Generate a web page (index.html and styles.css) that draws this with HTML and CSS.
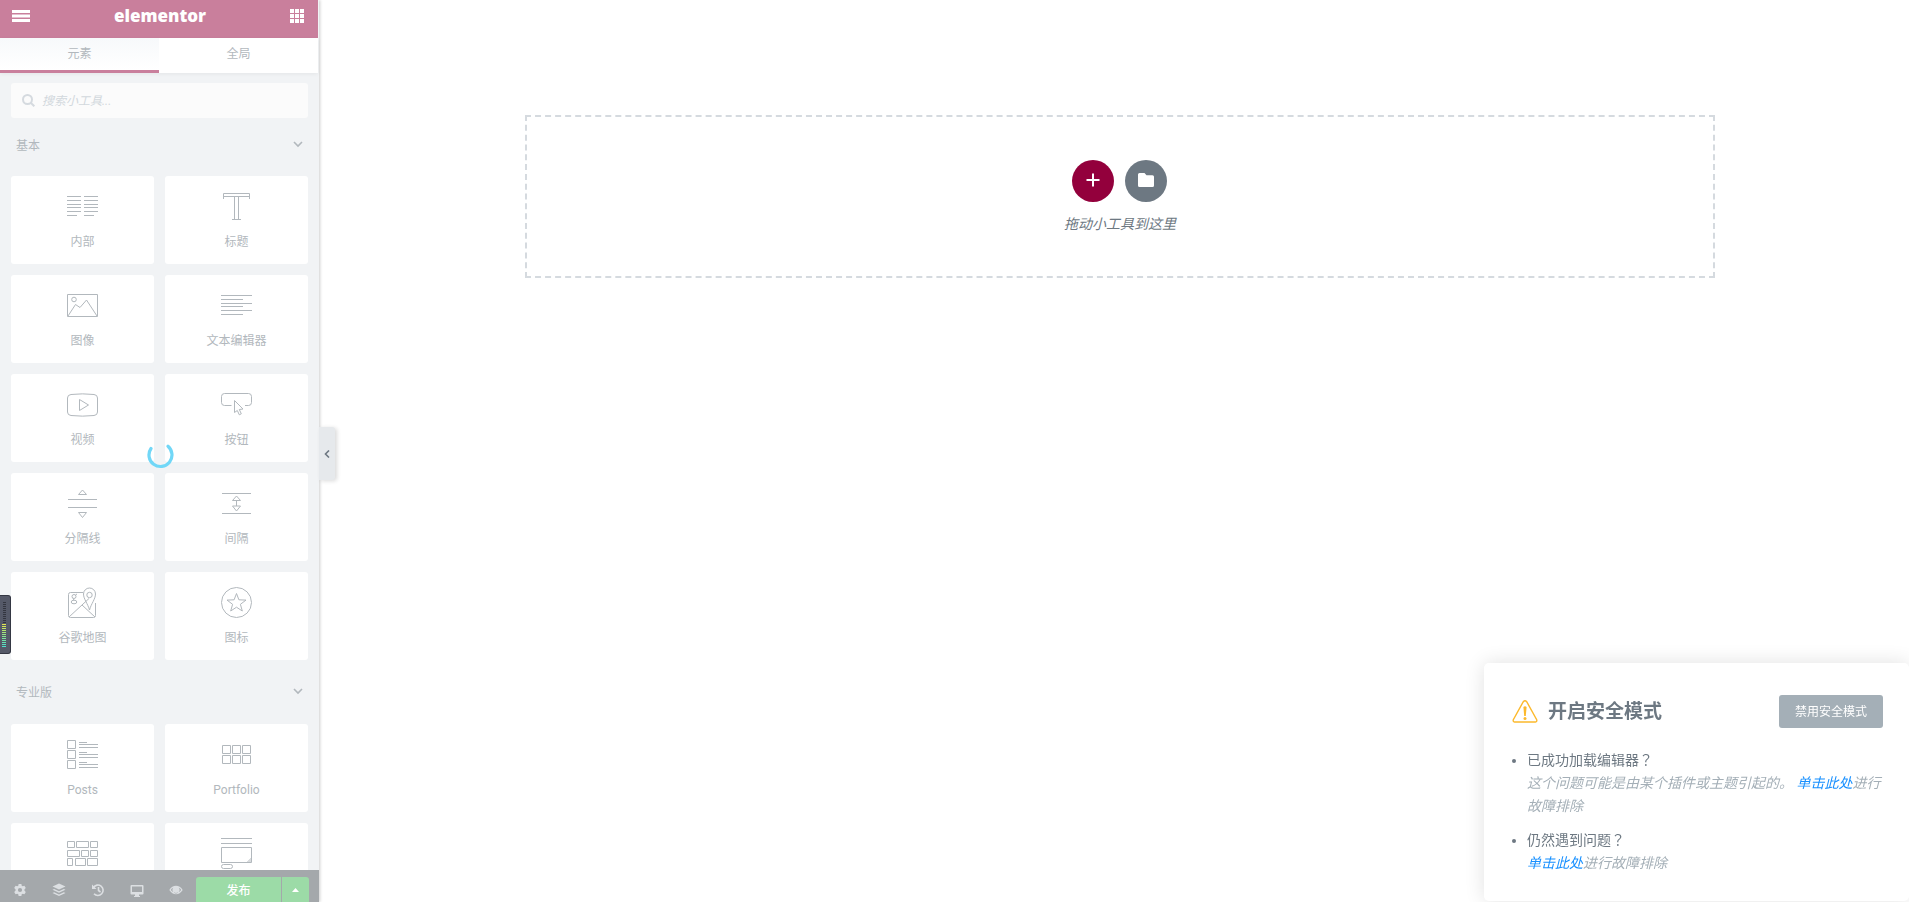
FILE: index.html
```html
<!DOCTYPE html>
<html lang="zh-CN">
<head>
<meta charset="utf-8">
<title>Elementor</title>
<link rel="stylesheet" href="styles.css">
</head>
<body>
<div class="editor">
  <aside class="panel">
    <header class="panel-header">
      <button class="icon-button" aria-label="菜单"><svg width="18" height="12" viewBox="0 0 18 12"><path d="M0 1.5h18M0 6h18M0 10.5h18" stroke="#fff" stroke-width="3"/></svg></button>
      <span class="logo">elementor</span>
      <button class="icon-button" aria-label="小工具"><svg width="14" height="14" viewBox="0 0 14 14" fill="#fff"><path d="M0 0h4v4H0zM5 0h4v4H5zM10 0h4v4h-4zM0 5h4v4H0zM5 5h4v4H5zM10 5h4v4h-4zM0 10h4v4H0zM5 10h4v4H5zM10 10h4v4h-4z"/></svg></button>
    </header>
    <nav class="tabs">
      <button class="tab tab-active">元素</button>
      <button class="tab">全局</button>
    </nav>
    <main class="panel-body">
      <label class="search">
        <svg width="13" height="13" viewBox="0 0 13 13" fill="none" stroke="#d5dadf" stroke-width="2"><circle cx="5.5" cy="5.5" r="4.5"/><path d="M9 9l3.3 3.3"/></svg>
        <input class="search-input" type="search" placeholder="搜索小工具..." aria-label="搜索小工具">
      </label>

      <button class="category">基本<svg width="10" height="7" viewBox="0 0 10 7"><path d="M1 1l4 4 4-4"/></svg></button>
      <div class="widgets">
        <button class="widget"><svg viewBox="0 0 31 31"><path d="M0 5.5h14M0 9.5h14M0 13.5h14M0 16.5h14M0 20.5h14M0 24.5h10M17 5.5h14M17 9.5h14M17 13.5h14M17 16.5h14M17 20.5h14M17 24.5h10"/></svg>内部</button>
        <button class="widget"><svg viewBox="0 0 31 31"><path d="M2.5 8V2.500h26V8M2.500 5.500h26M13.500 5.500v23M17.500 5.500v23M11 28.500h9"/></svg>标题</button>
        <button class="widget"><svg viewBox="0 0 31 31"><path d="M.5 4.5h30v22H.5zM1 26l7.500-11.500 4.500 3 6.500-7.500L30 26"/><circle cx="7" cy="9.500" r="2.300"/></svg>图像</button>
        <button class="widget"><svg viewBox="0 0 31 31"><path d="M0 5.500h31M0 9.500h22M0 13.500h31M0 16.500h22M0 20.500h31M0 24.500h22"/></svg>文本编辑器</button>
        <button class="widget"><svg viewBox="0 0 31 31"><path d="M4 5.500q11.500-1.300 23 0 3.500.3 3.500 3.500v14q0 3.200-3.500 3.500-11.500 1.300-23 0Q.5 26.200.5 23V9Q.5 5.800 4 5.500zM12.500 10.500v11l9-5.500z"/></svg>视频</button>
        <button class="widget"><svg viewBox="0 0 31 31"><path d="M10.500 16.500h-7q-3 0-3-3v-6q0-3 3-3h24q3 0 3 3v6q0 3-3 3H24M13.500 11.500v12l2.800-2 2 4.300 2-1-2-4.300 3.700-.5z"/></svg>按钮</button>
        <button class="widget"><svg viewBox="0 0 31 31"><path d="M1 11.500h29M1 19.500h29M15.500 2l4 4.500h-8zM15.500 29.500l4-5h-8z"/></svg>分隔线</button>
        <button class="widget"><svg viewBox="0 0 31 31"><path d="M1 5.500h29M1 25.500h29M15.500 8l4 4.500h-8zM15.500 23l4-5h-8zM15.500 12.500V18"/></svg>间隔</button>
        <button class="widget"><svg viewBox="0 0 31 31"><path d="M16 5.500H3.500q-2 0-2 2v21q0 2 2 2h23q2 0 2-2V16M2 30l20-18.500M15 18l13 12M22.500 23C21 17 16.500 12 16.500 7a6 6 0 0 1 12 0c0 5-4.500 10-6 16z"/><circle cx="22.500" cy="8" r="2.700"/><circle cx="7" cy="9.500" r="2"/><ellipse cx="7" cy="15" rx="2.800" ry="1.800"/><path d="M8.500 8L10 7M6 11.500l1 1.700"/></svg>谷歌地图</button>
        <button class="widget"><svg viewBox="0 0 31 31"><circle cx="15.500" cy="15.500" r="15"/><path d="M15.500 6.500l2.400 6.300 7.100.3-5.600 4.200 1.900 6.700-5.800-3.800L9.700 24l1.900-6.700L6 13.100l7.100-.3z"/></svg>图标</button>
      </div>

      <button class="category">专业版<svg width="10" height="7" viewBox="0 0 10 7"><path d="M1 1l4 4 4-4"/></svg></button>
      <div class="widgets">
        <button class="widget"><svg viewBox="0 0 31 31"><path d="M.5 1.500h8v8h-8zM.5 11.500h8v8h-8zM.5 21.500h8v8h-8zM12 3.500h8M12 5.500h19M12 8.500h19M12 13.500h8M12 15.500h19M12 18.500h19M12 23.500h8M12 25.500h19M12 28.500h19"/></svg>Posts</button>
        <button class="widget"><svg viewBox="0 0 31 31"><path d="M1.500 6.500h8v8h-8zM11.500 6.500h8v8h-8zM21.500 6.500h8v8h-8zM1.500 16.500h8v8h-8zM11.500 16.500h8v8h-8zM21.500 16.500h8v8h-8z"/></svg>Portfolio</button>
        <button class="widget" aria-label="Gallery"><svg viewBox="0 0 31 31"><path d="M.5 3.500h7v6h-7zM9.500 3.500h12v6h-12zM23.500 3.500h7v6h-7zM.5 12.500h12v6H.5zM14.500 12.500h7v6h-7zM23.500 12.500h7v6h-7zM.5 20.500h5v7h-5zM8.500 20.500h10v7h-10zM20.500 20.500h10v7h-10z"/></svg></button>
        <button class="widget" aria-label="Form"><svg viewBox="0 0 31 31"><path d="M0 .5h31M0 5.500h31M.5 9.500h30v15H.5zM26.500 24l4-4M28.500 24l2-2"/><rect x=".5" y="26.500" width="11" height="4" rx="2"/></svg></button>
      </div>
    </main>
    <footer class="panel-footer">
      <button class="tool" aria-label="设置"><svg viewBox="0 0 14 14"><path fill-rule="evenodd" d="M5.600 1h2.800l.3 1.700 1.100.6 1.600-.6 1.400 2.400-1.300 1.200v1.400l1.300 1.200-1.400 2.400-1.600-.6-1.100.6-.3 1.700H5.600l-.3-1.700-1.100-.6-1.600.6L1.200 8.900l1.300-1.200V6.300L1.200 5.100l1.400-2.400 1.600.6 1.100-.6zM7 4.900a2.100 2.100 0 1 0 0 4.200 2.100 2.100 0 0 0 0-4.200z"/></svg></button>
      <button class="tool" aria-label="导航器"><svg viewBox="0 0 14 14"><path d="M7 .5l6.500 3L7 6.500.5 3.500zM2.200 6L7 8.200 11.800 6l1.700.8L7 9.800.5 6.800zM2.200 9.300L7 11.500l4.800-2.200 1.700.8L7 13.100.5 10.100z"/></svg></button>
      <button class="tool" aria-label="历史"><svg viewBox="0 0 14 14"><path d="M2.500 4.500A5.200 5.200 0 1 1 3 10.700M7.500 4v3.500l2 1.500" fill="none" stroke="#dcdfe2" stroke-width="1.600"/><path d="M1 1.500V6h4.500z"/></svg></button>
      <button class="tool" aria-label="响应式模式"><svg viewBox="0 0 14 14"><path fill-rule="evenodd" d="M1.500 2h11q1 0 1 1v7.500q0 1-1 1H9V13h1v1H4v-1h1v-1.500H1.500q-1 0-1-1V3q0-1 1-1zM2 3.500V9h10V3.500z"/></svg></button>
      <button class="tool" aria-label="预览更改"><svg viewBox="0 0 14 14"><path fill-rule="evenodd" d="M.3 7Q3 2.800 7 2.800T13.700 7Q11 11.200 7 11.200T.3 7zM1.800 7Q4 10 7 10t5.200-3Q11.200 5.300 9.800 4.700a3.500 3.500 0 1 1-5.600 0Q2.800 5.300 1.800 7z"/></svg></button>
      <div class="publish-group">
        <button class="publish">发布</button>
        <button class="publish-more" aria-label="保存选项"><svg width="7" height="4" viewBox="0 0 7 4"><path d="M0 4L3.500 0 7 4z" fill="#fff"/></svg></button>
      </div>
    </footer>
    <svg class="spinner" viewBox="0 0 28 28"><path d="M5 7.500a11.500 11.500 0 1 0 17-2.200" fill="none" stroke="#71d7f7" stroke-width="3.200" stroke-linecap="round"/></svg>
    <button class="collapse" aria-label="隐藏面板"><svg width="6" height="8" viewBox="0 0 6 8"><path d="M5 .5L1.500 4 5 7.500" fill="none" stroke="#6d7882" stroke-width="1.600"/></svg></button>
  </aside>

  <section class="canvas">
    <div class="drop-zone">
      <div class="drop-actions">
        <button class="round round-add" aria-label="添加新版块"><svg width="14" height="14" viewBox="0 0 14 14"><path d="M7 .5v13M.5 7h13" stroke="#fff" stroke-width="2"/></svg></button>
        <button class="round round-folder" aria-label="添加模板"><svg width="16" height="14" viewBox="0 0 16 14"><path d="M1.500 0h5l2 2.300h6q1.500 0 1.500 1.500v8.700q0 1.500-1.500 1.500h-13Q0 14 0 12.500v-11Q0 0 1.500 0z" fill="#fff"/></svg></button>
      </div>
      <p class="drop-text">拖动小工具到这里</p>
    </div>
  </section>
</div>

<div class="meter" aria-hidden="true"><div class="meter-track"></div><div class="meter-level"></div></div>

<section class="safe-mode">
  <header class="safe-header">
    <svg width="26" height="23" viewBox="0 0 26 23"><path d="M11.300 1.700q1.700-2 3.400 0l10 18q.6 2-1.200 2.300h-21Q.7 21.700 1.300 19.700z" fill="none" stroke="#fcb92c" stroke-width="1.400"/><path d="M11.400 7q1.600-1.400 3.200 0L13.800 16h-1.600z" fill="#fcb92c"/><circle cx="13" cy="18.500" r="1.500" fill="#fcb92c"/></svg>
    <h2 class="safe-title">开启安全模式</h2>
    <button class="safe-button">禁用安全模式</button>
  </header>
  <ul class="safe-list">
    <li>已成功加载编辑器<span class="mark" lang="zh-TW">？</span><div class="safe-note">这个问题可能是由某个插件或主题引起的。 <a href="#">单击此处</a>进行故障排除</div></li>
    <li>仍然遇到问题<span class="mark" lang="zh-TW">？</span><div class="safe-note"><a href="#">单击此处</a>进行故障排除</div></li>
  </ul>
</section>
</body>
</html>
```
FILE: styles.css
```css
* { box-sizing: border-box; }

body {
  margin: 0;
  background: #fff;
  font-family: Roboto, "Noto Sans CJK SC", sans-serif;
  font-size: 12px;
}

button {
  margin: 0;
  padding: 0;
  border: 0;
  background: none;
  font: inherit;
  color: inherit;
}

.editor {
  display: flex;
  height: 100vh;
  overflow: hidden;
}

/* Side panel */
.panel {
  position: relative;
  display: flex;
  flex-direction: column;
  flex: 0 0 319px;
  background: #f1f3f5;
  color: #b2b8bd;
  box-shadow: 1px 0 3px rgba(0, 0, 0, 0.2);
}

.panel-header {
  display: flex;
  align-items: center;
  justify-content: space-between;
  flex: 0 0 38px;
  margin-right: 1px;
  padding: 0 14px 6px 12px;
  background: #c97f9c;
}

.icon-button { display: flex; }

.logo {
  color: #fff;
  font-family: "Open Sans", sans-serif;
  font-size: 17px;
  font-weight: 800;
  line-height: 24px;
}

.tabs {
  display: flex;
  flex: 0 0 35px;
  margin-right: 1px;
  box-shadow: 0 1px 4px rgba(0, 0, 0, 0.06);
}

.tab {
  flex: 1;
  padding-bottom: 3px;
  border-bottom: 3px solid #fff;
  background: #fff;
}

.tab-active {
  border-bottom-color: #c97f9c;
  background: linear-gradient(#f7f9fb, #fff);
}

.panel-body {
  flex: 1;
  min-height: 0;
  overflow: hidden;
  padding: 10px 11px 0;
}

.search {
  display: flex;
  align-items: center;
  gap: 7px;
  height: 35px;
  padding: 0 11px;
  border-radius: 3px;
  background: #fbfbfb;
}

.search-input {
  flex: 1;
  min-width: 0;
  padding: 0;
  border: 0;
  outline: 0;
  background: none;
  font: italic 12px Roboto, "Noto Sans CJK SC", sans-serif;
}

.search-input::placeholder { color: #d2d8dd; }

.category {
  display: flex;
  align-items: center;
  justify-content: space-between;
  width: 100%;
  height: 64px;
  padding: 0 5px 2px;
}

.search + .category {
  height: 58px;
  padding-bottom: 5px;
}

.category path {
  fill: none;
  stroke: #b2b8bd;
  stroke-width: 1.6;
}

.widgets {
  display: grid;
  grid-template-columns: 1fr 1fr;
  gap: 11px;
}

.widget {
  display: flex;
  flex-direction: column;
  align-items: center;
  gap: 11px;
  height: 88px;
  padding-top: 15px;
  border-radius: 3px;
  background: #fff;
  line-height: 18px;
}

.widget svg {
  flex: none;
  width: 31px;
  height: 31px;
  fill: none;
  stroke: #b2b8bd;
}

.panel-footer {
  display: flex;
  align-items: stretch;
  flex: 0 0 32px;
  background: #a4a8ab;
}

.tool {
  display: flex;
  align-items: center;
  justify-content: center;
  width: 39px;
  padding-top: 8px;
}

.tool svg {
  width: 14px;
  height: 14px;
  fill: #dcdfe2;
}

.publish-group {
  display: flex;
  flex: 1;
  gap: 1px;
  padding: 7px 10px 0 1px;
}

.publish {
  flex: 1;
  border-radius: 3px 0 0 0;
  background: #9cdba7;
  color: #fff;
  font-weight: 500;
}

.publish-more {
  display: flex;
  align-items: center;
  justify-content: center;
  width: 27px;
  border-radius: 0 3px 0 0;
  background: #9cdba7;
}

.spinner {
  position: absolute;
  top: 441px;
  left: 146px;
  width: 28px;
  height: 28px;
}

.collapse {
  position: absolute;
  top: 427px;
  left: 100%;
  display: flex;
  align-items: center;
  justify-content: center;
  width: 16px;
  height: 53px;
  border-radius: 0 3px 3px 0;
  background: #e6e9ec;
  box-shadow: 2px 1px 4px rgba(0, 0, 0, 0.15);
}

/* Canvas */
.canvas {
  flex: 1;
  padding: 115px 10px 0 22px;
}

.drop-zone {
  display: flex;
  flex-direction: column;
  align-items: center;
  gap: 12px;
  max-width: 1190px;
  margin: 0 auto;
  padding: 43px 0 41px;
  border: 2px dashed #d5dadf;
}

.drop-actions {
  display: flex;
  gap: 11px;
  padding-right: 2px;
}

.round {
  display: flex;
  align-items: center;
  justify-content: center;
  width: 42px;
  height: 42px;
  padding-bottom: 2px;
  border-radius: 50%;
}

.round-add { background: #93003c; }
.round-folder { background: #6d7882; }

.drop-text {
  margin: 0;
  color: #6d7882;
  font-size: 14px;
  font-style: italic;
  line-height: 21px;
}

/* Audio level indicator on the window edge */
.meter {
  position: fixed;
  top: 595px;
  left: 0;
  width: 11px;
  height: 59px;
  padding: 6px 4px 6px 2px;
  border: 1px solid #343743;
  border-left: 0;
  border-radius: 0 3px 3px 0;
  background: #555968;
}

.meter-track {
  height: 22px;
  margin-left: 1px;
  background: repeating-linear-gradient(#33353f 0 1px, #555968 1px 2px);
}

.meter-level {
  height: 23px;
  background:
    repeating-linear-gradient(transparent 0 1px, #555968 1px 2px),
    linear-gradient(#e6e84a, #8de68a 50%, #4be0cf);
}

/* Safe mode notice */
.safe-mode {
  position: fixed;
  right: 0;
  bottom: 1px;
  width: 425px;
  padding: 32px 26px 26px 28px;
  border-radius: 5px;
  background: #fff;
  color: #6d7882;
  box-shadow: 0 0 20px rgba(0, 0, 0, 0.12);
}

.safe-header {
  display: flex;
  align-items: center;
  gap: 10px;
}

.safe-title {
  flex: 1;
  margin: 0;
  font-size: 19px;
  font-weight: 700;
  line-height: 28px;
}

.safe-button {
  width: 104px;
  height: 33px;
  padding-bottom: 2px;
  border-radius: 3px;
  background: #a4afb7;
  color: #fff;
}

.safe-list {
  margin: 21px 0 0;
  padding: 0 0 0 15px;
  font-size: 14px;
  line-height: 23px;
}

.safe-list li + li { margin-top: 11px; }

.mark {
  font-family: "Noto Sans CJK TC", sans-serif;
  line-height: 1;
}

.safe-note {
  color: #a4afb7;
  font-style: italic;
}

.safe-note a {
  color: #1890ff;
  text-decoration: none;
}
```
